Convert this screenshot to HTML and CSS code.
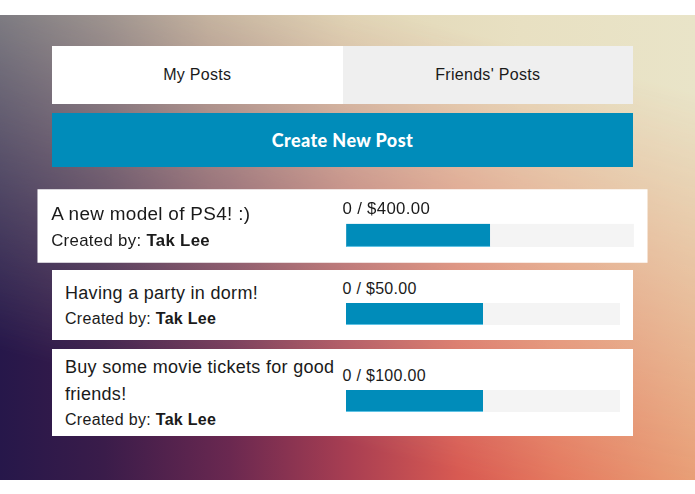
FILE: index.html
```html
<!DOCTYPE html>
<html>
<head>
<meta charset="utf-8">
<link rel="stylesheet" href="styles.css">
</head>
<body>
<div class="top-gap"></div>
<section class="hero">
  <div class="wrap">
    <div class="tabs">
      <div class="tab active">My Posts</div>
      <div class="tab">Friends' Posts</div>
    </div>
    <div class="create-btn">Create New Post</div>
    <div class="posts">
      <div class="card raised">
        <div class="col info">
          <div class="title">A new model of PS4! :)</div>
          <div class="by">Created by: <b>Tak Lee</b></div>
        </div>
        <div class="col goal">
          <div class="amount">0 / $400.00</div>
          <div class="progress"><div class="meter" style="width:50%"></div></div>
        </div>
      </div>
      <div class="card">
        <div class="col info">
          <div class="title">Having a party in dorm!</div>
          <div class="by">Created by: <b>Tak Lee</b></div>
        </div>
        <div class="col goal">
          <div class="amount">0 / $50.00</div>
          <div class="progress"><div class="meter" style="width:50%"></div></div>
        </div>
      </div>
      <div class="card">
        <div class="col info">
          <div class="title">Buy some movie tickets for good friends!</div>
          <div class="by">Created by: <b>Tak Lee</b></div>
        </div>
        <div class="col goal">
          <div class="amount">0 / $100.00</div>
          <div class="progress"><div class="meter" style="width:50%"></div></div>
        </div>
      </div>
    </div>
  </div>
</section>
</body>
</html>
```
FILE: styles.css
```css
html, body {
  margin: 0;
  padding: 0;
  background: #ffffff;
}
body {
  width: 695px;
  height: 494px;
  overflow: hidden;
  font-family: "Liberation Sans", Arial, Helvetica, sans-serif;
  color: #1a1a1a;
}
.top-gap {
  height: 15px;
}
.hero {
  position: relative;
  height: 465px;
  box-sizing: border-box;
  padding-top: 31px;
  background: linear-gradient(to right, #9a9c94 0%, #b4ae9e 15%, #d2c6aa 30%, #e2d8b8 50%, #e8e0c2 75%, #e9e4c8 100%);
}
.hero::before {
  content: "";
  position: absolute;
  inset: 0;
  background: linear-gradient(to right, #26174a 0%, #3a1c4a 15%, #6a2850 33%, #a83e52 50%, #d85a52 66%, #e4745a 80%, #e8946a 100%);
  -webkit-mask-image: linear-gradient(195deg, transparent 12%, #000 80%);
  mask-image: linear-gradient(195deg, transparent 12%, #000 80%);
}
.wrap {
  position: relative;
  width: 581px;
  margin-left: 52px;
}
.tabs {
  display: flex;
  height: 58px;
}
.tab {
  flex: 1;
  display: flex;
  align-items: center;
  justify-content: center;
  background: #efefef;
  font-size: 16px;
  letter-spacing: 0.3px;
}
.tab.active {
  background: #ffffff;
}
.create-btn {
  margin-top: 9px;
  height: 54px;
  display: flex;
  align-items: center;
  justify-content: center;
  background: #008cba;
  color: #ffffff;
  font-family: Lato, "Open Sans", sans-serif;
  font-weight: 900;
  font-size: 18px;
  letter-spacing: 0.4px;
}
.posts {
  margin-top: 24px;
  display: flex;
  flex-direction: column;
  gap: 9px;
}
.card {
  display: flex;
  align-items: center;
  background: #ffffff;
  padding: 4.5px 13px;
}
.card.raised {
  transform: scale(1.05);
}
.col {
  flex: 1 1 0;
  min-width: 0;
}
.title {
  font-size: 18px;
  line-height: 27px;
  letter-spacing: 0.3px;
}
.by {
  font-size: 16px;
  line-height: 24px;
  letter-spacing: 0.3px;
}
.amount {
  font-size: 16px;
  line-height: 24px;
  letter-spacing: 0.3px;
  padding-top: 2px;
}
.progress {
  margin: 2px 0 11px 3px;
  height: 22px;
  background: #f4f4f4;
}
.meter {
  height: 100%;
  background: #008cba;
  border-bottom: 1px solid #5ec2e4;
  box-sizing: border-box;
}
```
